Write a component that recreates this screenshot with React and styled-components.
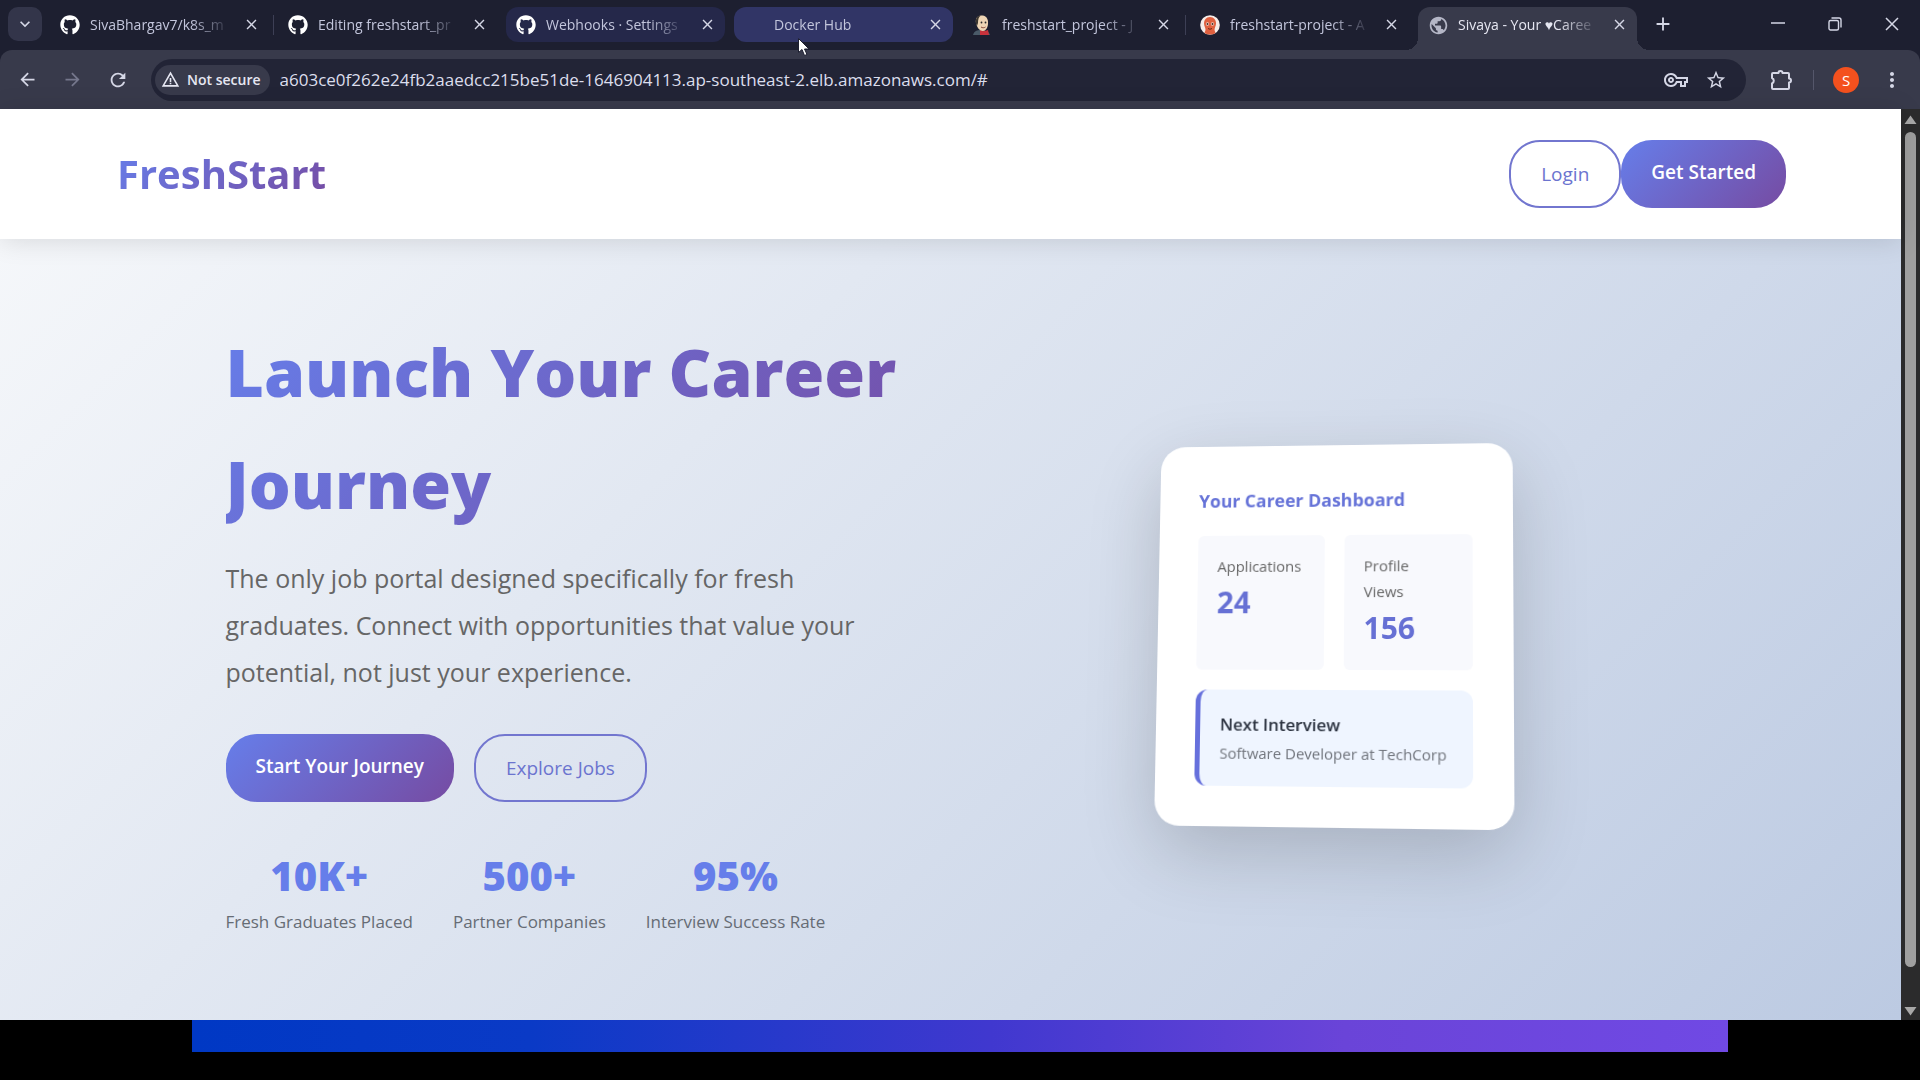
import React from "react";
import styled, { createGlobalStyle, css } from "styled-components";
import { FaGithub } from "react-icons/fa";
import {
  MdAdd,
  MdArrowBack,
  MdArrowForward,
  MdClose,
  MdKeyboardArrowDown,
  MdMoreVert,
  MdOutlineVpnKey,
  MdPublic,
  MdRefresh,
  MdStarBorder,
  MdWarningAmber,
} from "react-icons/md";

const brand = "#667eea";
const brandGradient = "linear-gradient(135deg, #667eea 0%, #764ba2 100%)";

const GlobalStyle = createGlobalStyle`
  *, *::before, *::after { box-sizing: border-box; }
  body {
    margin: 0;
    background: #000;
    font-family: "Open Sans", "Noto Sans", sans-serif;
    color: #333;
  }
  h1, h2, h3, p, dl, dd, ul { margin: 0; padding: 0; }
  button, input { font: inherit; }
`;

const Screen = styled.div`
  min-height: 100vh;
  display: flex;
  flex-direction: column;
`;

/* ---------- browser chrome ---------- */

const TabStrip = styled.div`
  height: 50px;
  display: flex;
  align-items: flex-start;
  padding: 7px 0 0 8px;
  background: #1d1f30;
`;

const IconButton = styled.button`
  display: grid;
  place-items: center;
  flex: none;
  width: ${(p) => p.$w || 34}px;
  height: ${(p) => p.$h || 34}px;
  padding: 0;
  border: 0;
  border-radius: 10px;
  background: ${(p) => p.$bg || "transparent"};
  color: ${(p) => p.$color || "#d5d7e6"};
`;

const TabList = styled.ul`
  display: flex;
  flex: 0 1 1604px;
  min-width: 0;
  padding-left: 8px;
  list-style: none;
`;

const TabItem = styled.li`
  position: relative;
  flex: 1 1 0;
  min-width: 0;
  padding-right: 9px;
  ${(p) =>
    p.$separator &&
    css`
      &::after {
        content: "";
        position: absolute;
        right: 4px;
        top: 8px;
        width: 1px;
        height: 20px;
        background: #3d3f55;
      }
    `}
`;

const tabTones = {
  plain: "transparent",
  loading: "#25284a",
  hover: "#313566",
  active: "#383a4b",
};

const Tab = styled.div`
  position: relative;
  display: flex;
  align-items: center;
  gap: 10px;
  height: 35px;
  padding: 0 8px 0 10px;
  border-radius: 12px;
  background: ${(p) => tabTones[p.$tone]};
  color: ${(p) => (p.$tone === "active" ? "#e6e7f2" : "#c3c6dc")};
  ${(p) =>
    p.$tone === "active" &&
    css`
      height: 43px;
      padding-bottom: 8px;
      border-radius: 12px 12px 0 0;
      &::before,
      &::after {
        content: "";
        position: absolute;
        bottom: 0;
        width: 12px;
        height: 12px;
      }
      &::before {
        left: -12px;
        background: radial-gradient(circle at 0 0, transparent 12px, #383a4b 12px);
      }
      &::after {
        right: -12px;
        background: radial-gradient(circle at 100% 0, transparent 12px, #383a4b 12px);
      }
    `}
`;

const Favicon = styled.span`
  display: grid;
  place-items: center;
  flex: none;
  width: 20px;
  height: 20px;
  color: ${(p) => p.$color || "#fff"};
`;

const TabTitle = styled.span`
  flex: 1;
  min-width: 0;
  white-space: nowrap;
  font-size: 14px;
  line-height: 24px;
  mask-image: linear-gradient(90deg, #000 calc(100% - 40px), transparent 100%);
`;

const WindowControls = styled.div`
  display: flex;
  margin-left: auto;
`;

const Toolbar = styled.div`
  background: #1d1f30;
`;

const ToolbarInner = styled.div`
  display: flex;
  align-items: center;
  height: 59px;
  padding: 0 11px 0 8px;
  border-radius: 12px 12px 0 0;
  background: #383a4b;
`;

const NavButtons = styled.div`
  display: flex;
  gap: 6px;
  margin-right: 14px;
`;

const AddressBar = styled.form`
  display: flex;
  align-items: center;
  flex: 1;
  min-width: 0;
  height: 42px;
  padding: 0 10px 0 4px;
  border-radius: 21px;
  background: #222436;
  color: #dcdeed;
`;

const SecurityChip = styled.button`
  display: flex;
  align-items: center;
  gap: 7px;
  flex: none;
  height: 30px;
  padding: 0 9px 0 6px;
  border: 0;
  border-radius: 15px;
  background: #383a4b;
  color: #e6e7f2;
  font-size: 14px;
  font-weight: 600;
`;

const AddressInput = styled.input`
  flex: 1;
  min-width: 0;
  margin-left: 10px;
  padding: 0;
  border: 0;
  outline: 0;
  background: transparent;
  color: inherit;
  font-size: 17px;
  line-height: 24px;
`;

const ToolbarActions = styled.div`
  display: flex;
  align-items: center;
  gap: 12px;
  margin-left: 18px;
`;

const Divider = styled.span`
  width: 1px;
  height: 20px;
  margin: 0 3px;
  background: #55576b;
`;

const Avatar = styled.span`
  display: grid;
  place-items: center;
  width: 26px;
  height: 26px;
  border-radius: 50%;
  background: #f4511e;
  color: #fff;
  font-size: 15px;
`;

const Cursor = styled.svg`
  position: absolute;
  left: 797px;
  top: 37px;
  z-index: 5;
`;

/* ---------- page viewport ---------- */

const Viewport = styled.div`
  flex: 1;
  display: flex;
`;

const Page = styled.div`
  flex: 1;
  min-width: 0;
  display: flex;
  flex-direction: column;
`;

const Scrollbar = styled.div`
  display: flex;
  flex-direction: column;
  align-items: center;
  gap: 7px;
  width: 19px;
  padding: 6px 0 4px;
  background: #2b2b2c;
`;

const ScrollThumb = styled.div`
  flex: 1;
  width: 11px;
  margin-bottom: 32px;
  border-radius: 6px;
  background: #9f9f9f;
`;

const Header = styled.header`
  position: relative;
  z-index: 1;
  display: flex;
  justify-content: space-between;
  align-items: center;
  padding: 31px 115px 31px 117px;
  background: #fff;
  box-shadow: 0 2px 25px rgba(0, 0, 0, 0.12);
`;

const Logo = styled.div`
  font-size: 40px;
  line-height: 64px;
  font-weight: 700;
  background: ${brandGradient};
  background-clip: text;
  color: transparent;
`;

const ButtonRow = styled.div`
  display: flex;
  gap: ${(p) => p.$gap || 0}px;
`;

const Button = styled.a`
  padding: 18px 30px;
  border-radius: 31px;
  font-size: 19px;
  line-height: 28px;
  text-decoration: none;
  ${(p) =>
    p.$primary
      ? css`
          background: ${brandGradient};
          color: #fff;
          font-weight: 600;
        `
      : css`
          border: 2px solid #7276cf;
          color: #6b74cf;
          font-weight: 500;
        `}
`;

const Hero = styled.main`
  flex: 1;
  padding: 76px 100px 60px;
  background: linear-gradient(135deg, #f5f7fa 0%, #bccae2 100%);
`;

const HeroGrid = styled.div`
  display: grid;
  grid-template-columns: 1fr 1fr;
  gap: 80px;
  align-items: center;
  max-width: 1450px;
  margin: 0 auto;
`;

const HeroText = styled.section`
  padding-bottom: 16px;
`;

const Title = styled.h1`
  font-size: 66px;
  line-height: 112px;
  font-weight: 800;
  background: ${brandGradient};
  background-clip: text;
  color: transparent;
`;

const Lead = styled.p`
  max-width: 640px;
  margin: 16px 0 38px;
  font-size: 25px;
  line-height: 47px;
  color: #666;
`;

const Stats = styled.dl`
  display: flex;
  gap: 40px;
  margin-top: 42px;
`;

const Stat = styled.div`
  display: flex;
  flex-direction: column-reverse;
  text-align: center;
`;

const StatValue = styled.dd`
  font-size: 40px;
  line-height: 64px;
  font-weight: 800;
  color: ${brand};
`;

const StatLabel = styled.dt`
  font-size: 17px;
  line-height: 28px;
  color: #666c75;
`;

const CardStage = styled.section`
  display: flex;
  justify-content: center;
  perspective: 1250px;
`;

const Card = styled.article`
  display: grid;
  gap: 20px;
  width: 357px;
  padding: 40px;
  border-radius: 25px;
  background: #fff;
  box-shadow: 0 25px 75px rgba(0, 0, 0, 0.18);
  transform: rotateY(-5deg) rotateX(5deg);
`;

const CardTitle = styled.h2`
  font-size: 18px;
  line-height: 32px;
  font-weight: 700;
  color: #6673d8;
`;

const Metrics = styled.dl`
  display: grid;
  grid-template-columns: 1fr 1fr;
  gap: 20px;
`;

const Metric = styled.div`
  padding: 18px 20px;
  border-radius: 6px;
  background: #f8f9fd;
`;

const MetricLabel = styled.dt`
  font-size: 15px;
  line-height: 26px;
  color: #666;
`;

const MetricValue = styled.dd`
  font-size: 30px;
  line-height: 48px;
  font-weight: 700;
  color: #6670d4;
`;

const Interview = styled.div`
  padding: 20px;
  border-left: 5px solid #6670dc;
  border-radius: 12px;
  background: #eff5ff;
`;

const InterviewTitle = styled.h3`
  font-size: 17px;
  line-height: 30px;
  font-weight: 600;
  color: #2c3340;
`;

const InterviewText = styled.p`
  font-size: 15px;
  line-height: 26px;
  white-space: nowrap;
  color: #70747c;
`;

const BottomArea = styled.footer`
  height: 60px;
  background: #000;
`;

const Banner = styled.div`
  width: 80%;
  height: 32px;
  margin: 0 auto;
  background: linear-gradient(90deg, #0038c4 0%, #0a3ac6 22%, #4038cf 52%, #6a44d8 75%, #7049e4 100%);
`;

/* ---------- small drawings ---------- */

const JenkinsIcon = () => (
  <svg width="20" height="20" viewBox="0 0 20 20" aria-hidden="true">
    <path d="M1 20c1-4 4-5 8-5s8 1 9 5z" fill="#4a5a68" />
    <path d="M8 15l5 1 3-1 1 5H8z" fill="#c8323c" />
    <path d="M4 8C3 2 7 0 10.500 .5 15 1 16.500 5 16 9c-.3 4-2.500 7-5 7-3 0-6-3-7-8z" fill="#efd5b5" />
    <path d="M4 9C3 3 6 .5 9 .6 6.500 2 6 5 6 8l-1 3z" fill="#3b3630" />
    <circle cx="9.500" cy="7.500" r=".9" fill="#2b2b2b" />
    <circle cx="13.500" cy="7.500" r=".9" fill="#2b2b2b" />
    <path d="M9 12c1.500 1 3 1 4.500 0" stroke="#8a4a3a" fill="none" />
  </svg>
);

const ArgoIcon = () => (
  <svg width="20" height="20" viewBox="0 0 20 20" aria-hidden="true">
    <circle cx="10" cy="10" r="9.800" fill="#f6ece8" />
    <path d="M10 2c4 0 6 3 6 6.500 0 2.500-1.500 4-1.500 6.500l1 3c-3.500 2-7.500 2-11 0l1-3C5.500 12.500 4 11 4 8.500 4 5 6 2 10 2z" fill="#e0603f" />
    <circle cx="7.500" cy="9" r="1.700" fill="#f3d9cf" />
    <circle cx="12.500" cy="9" r="1.700" fill="#f3d9cf" />
    <circle cx="7.500" cy="9" r="1" fill="#4a2a20" />
    <circle cx="12.500" cy="9" r="1" fill="#4a2a20" />
    <path d="M8 13.500q2 1.500 4 0" stroke="#6b2a18" fill="none" />
  </svg>
);

const PuzzleIcon = () => (
  <svg width="24" height="24" viewBox="0 0 24 24" fill="none" stroke="currentColor" strokeWidth="2" strokeLinejoin="round" aria-hidden="true">
    <path d="M4 5h5.500a2 2 0 0 1 4 0H19a1 1 0 0 1 1 1v4.500a2 2 0 0 1 0 4V20a1 1 0 0 1-1 1H4a1 1 0 0 1-1-1v-4.500a3 3 0 0 0 0-5.500V6a1 1 0 0 1 1-1z" />
  </svg>
);

const MinimizeIcon = () => (
  <svg width="14" height="14" viewBox="0 0 14 14" aria-hidden="true">
    <path d="M0 6h14" stroke="currentColor" strokeWidth="1.500" />
  </svg>
);

const RestoreIcon = () => (
  <svg width="14" height="14" viewBox="0 0 14 14" fill="none" stroke="currentColor" strokeWidth="1.400" aria-hidden="true">
    <rect x="1" y="3.500" width="9.500" height="9.500" rx="1.500" />
    <path d="M3.500 1H11a2 2 0 0 1 2 2v7.500" />
  </svg>
);

const CloseWindowIcon = () => (
  <svg width="14" height="14" viewBox="0 0 14 14" aria-hidden="true">
    <path d="M1 1l12 12M13 1L1 13" stroke="currentColor" strokeWidth="1.500" />
  </svg>
);

const ScrollArrow = ({ down }) => (
  <svg width="13" height="10" viewBox="0 0 13 10" aria-hidden="true">
    <path d={down ? "M.5 1h12L6.500 9.500z" : "M.5 9h12L6.500 .5z"} fill="#a8a8a8" />
  </svg>
);

const tabs = [
  { title: "SivaBhargav7/k8s_m", icon: <FaGithub size={20} />, tone: "plain", separator: true },
  { title: "Editing freshstart_pr", icon: <FaGithub size={20} />, tone: "plain" },
  { title: "Webhooks · Settings", icon: <FaGithub size={20} />, tone: "loading" },
  { title: "Docker Hub", icon: null, tone: "hover" },
  { title: "freshstart_project - J", icon: <JenkinsIcon />, tone: "plain", separator: true },
  { title: "freshstart-project - A", icon: <ArgoIcon />, tone: "plain" },
  { title: "Sivaya - Your ♥Caree", icon: <MdPublic size={21} />, tone: "active", color: "#b4b6c6" },
];

const stats = [
  { value: "10K+", label: "Fresh Graduates Placed" },
  { value: "500+", label: "Partner Companies" },
  { value: "95%", label: "Interview Success Rate" },
];

const metrics = [
  { label: "Applications", value: "24" },
  { label: "Profile Views", value: "156" },
];

export default function App() {
  return (
    <Screen>
      <GlobalStyle />
      <TabStrip>
        <IconButton $bg="#33354a" aria-label="Search tabs">
          <MdKeyboardArrowDown size={20} />
        </IconButton>
        <TabList>
          {tabs.map((t) => (
            <TabItem key={t.title} $separator={t.separator}>
              <Tab $tone={t.tone}>
                <Favicon $color={t.color}>{t.icon}</Favicon>
                <TabTitle>{t.title}</TabTitle>
                <IconButton $w={20} $h={20} aria-label={`Close ${t.title}`}>
                  <MdClose size={17} />
                </IconButton>
              </Tab>
            </TabItem>
          ))}
        </TabList>
        <IconButton aria-label="New tab">
          <MdAdd size={22} />
        </IconButton>
        <WindowControls>
          <IconButton $w={57} aria-label="Minimize"><MinimizeIcon /></IconButton>
          <IconButton $w={57} aria-label="Restore"><RestoreIcon /></IconButton>
          <IconButton $w={57} aria-label="Close window"><CloseWindowIcon /></IconButton>
        </WindowControls>
      </TabStrip>
      <Cursor width="14" height="20" viewBox="0 0 14 20" aria-hidden="true">
        <path d="M1.500 1.500v14l3.500-3 2.500 6 2.500-1-2.500-5.500h4.500z" fill="#fff" stroke="#1d1f30" />
      </Cursor>

      <Toolbar>
        <ToolbarInner>
          <NavButtons>
            <IconButton $w={39} aria-label="Back"><MdArrowBack size={21} /></IconButton>
            <IconButton $w={39} $color="#75778c" aria-label="Forward"><MdArrowForward size={21} /></IconButton>
            <IconButton $w={39} aria-label="Reload"><MdRefresh size={22} /></IconButton>
          </NavButtons>
          <AddressBar onSubmit={(e) => e.preventDefault()}>
            <SecurityChip type="button">
              <MdWarningAmber size={19} />
              Not secure
            </SecurityChip>
            <AddressInput
              aria-label="Address"
              defaultValue="a603ce0f262e24fb2aaedcc215be51de-1646904113.ap-southeast-2.elb.amazonaws.com/#"
            />
            <IconButton type="button" $w={40} aria-label="Passwords"><MdOutlineVpnKey size={24} /></IconButton>
            <IconButton type="button" $w={40} aria-label="Bookmark"><MdStarBorder size={22} /></IconButton>
          </AddressBar>
          <ToolbarActions>
            <IconButton aria-label="Extensions"><PuzzleIcon /></IconButton>
            <Divider />
            <IconButton aria-label="Profile"><Avatar>S</Avatar></IconButton>
            <IconButton aria-label="Menu"><MdMoreVert size={24} /></IconButton>
          </ToolbarActions>
        </ToolbarInner>
      </Toolbar>

      <Viewport>
        <Page>
          <Header>
            <Logo>FreshStart</Logo>
            <ButtonRow as="nav">
              <Button href="#">Login</Button>
              <Button href="#" $primary>Get Started</Button>
            </ButtonRow>
          </Header>
          <Hero>
            <HeroGrid>
              <HeroText>
                <Title>Launch Your Career Journey</Title>
                <Lead>
                  The only job portal designed specifically for fresh graduates. Connect with
                  opportunities that value your potential, not just your experience.
                </Lead>
                <ButtonRow $gap={20}>
                  <Button href="#" $primary>Start Your Journey</Button>
                  <Button href="#">Explore Jobs</Button>
                </ButtonRow>
                <Stats>
                  {stats.map((s) => (
                    <Stat key={s.label}>
                      <StatLabel>{s.label}</StatLabel>
                      <StatValue>{s.value}</StatValue>
                    </Stat>
                  ))}
                </Stats>
              </HeroText>
              <CardStage>
                <Card>
                  <CardTitle>Your Career Dashboard</CardTitle>
                  <Metrics>
                    {metrics.map((m) => (
                      <Metric key={m.label}>
                        <MetricLabel>{m.label}</MetricLabel>
                        <MetricValue>{m.value}</MetricValue>
                      </Metric>
                    ))}
                  </Metrics>
                  <Interview>
                    <InterviewTitle>Next Interview</InterviewTitle>
                    <InterviewText>Software Developer at TechCorp</InterviewText>
                  </Interview>
                </Card>
              </CardStage>
            </HeroGrid>
          </Hero>
        </Page>
        <Scrollbar>
          <ScrollArrow />
          <ScrollThumb />
          <ScrollArrow down />
        </Scrollbar>
      </Viewport>
      <BottomArea>
        <Banner />
      </BottomArea>
    </Screen>
  );
}
